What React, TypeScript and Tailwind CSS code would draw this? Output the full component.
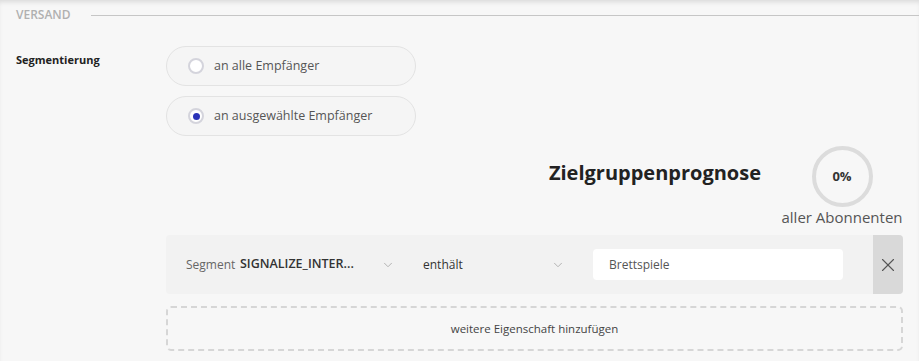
import { ChevronDown, X } from 'lucide-react'

function Radio({ label, checked }: { label: string; checked?: boolean }) {
  return (
    <div className="flex items-center h-[40px] w-[250px] rounded-full border border-[#e3e3e3] bg-[#f5f5f5] pl-[21px]">
      <span className="flex items-center justify-center w-[16px] h-[16px] rounded-full border-2 border-[#d4d4dc] bg-white">
        {checked && <span className="w-[7px] h-[7px] rounded-full bg-[#2a32b8]" />}
      </span>
      <span className="ml-[10px] text-[12.5px] text-[#555]">{label}</span>
    </div>
  )
}

export default function App() {
  return (
    <div className="min-h-screen bg-[#f7f7f7] shadow-[inset_0_4px_5px_-2px_rgba(0,0,0,0.12)] px-4 pt-[6px] font-['Open_Sans',sans-serif]">
      <div className="flex items-center gap-[20px]">
        <span className="text-[12px] font-semibold text-[#b0b0b0]">VERSAND</span>
        <div className="flex-1 h-px bg-[#c6c6c6] mr-[-16px]" />
      </div>

      <div className="flex mt-[22px]">
        <div className="w-[150px] pt-[6px] text-[11px] font-bold text-[#222]">Segmentierung</div>
        <div className="flex-1">
          <div className="flex flex-col gap-[10px]">
            <Radio label="an alle Empfänger" />
            <Radio label="an ausgewählte Empfänger" checked />
          </div>

          <div className="flex justify-end items-start mt-[10px]">
            <h2 className="mt-[13px] text-[20px] leading-[28px] font-bold text-[#222]">Zielgruppenprognose</h2>
            <div className="ml-[20px] flex flex-col items-center w-[122px]">
              <div className="w-[61px] h-[61px] rounded-full border-[4px] border-[#dcdcdc] flex items-center justify-center">
                <span className="text-[13px] font-bold text-[#333]">0%</span>
              </div>
              <span className="text-[15px] leading-[21px] text-[#555]">aller Abonnenten</span>
            </div>
          </div>

          <div className="mt-[7px] flex items-stretch h-[59px] rounded-[4px] bg-[#f2f2f2]">
            <div className="flex-1 flex items-center pl-[20px] pr-[30px]">
              <span className="w-[54px] text-[12px] text-[#666]">Segment</span>
              <span className="w-[141px] text-[12.5px] font-semibold text-[#333] truncate">SIGNALIZE_INTER...</span>
              <ChevronDown className="w-[14px] h-[14px] text-[#aaa]" strokeWidth={1.5} />
              <span className="ml-[28px] w-[128px] text-[12px] text-[#333]">enthält</span>
              <ChevronDown className="w-[14px] h-[14px] text-[#aaa]" strokeWidth={1.5} />
              <div className="ml-[28px] flex-1 h-[31px] rounded-[4px] bg-white flex items-center pl-[16px] text-[12px] text-[#555]">
                Brettspiele
              </div>
            </div>
            <button className="w-[30px] bg-[#d9d9d9] rounded-r-[4px] flex items-center justify-center">
              <X className="w-[22px] h-[22px] text-[#555]" strokeWidth={1.2} />
            </button>
          </div>

          <div className="mt-[12px] h-[45px] rounded-[5px] border-2 border-dashed border-[#d6d6d6] flex items-center justify-center text-[11.5px] text-[#444]">
            weitere Eigenschaft hinzufügen
          </div>
        </div>
      </div>
    </div>
  )
}
